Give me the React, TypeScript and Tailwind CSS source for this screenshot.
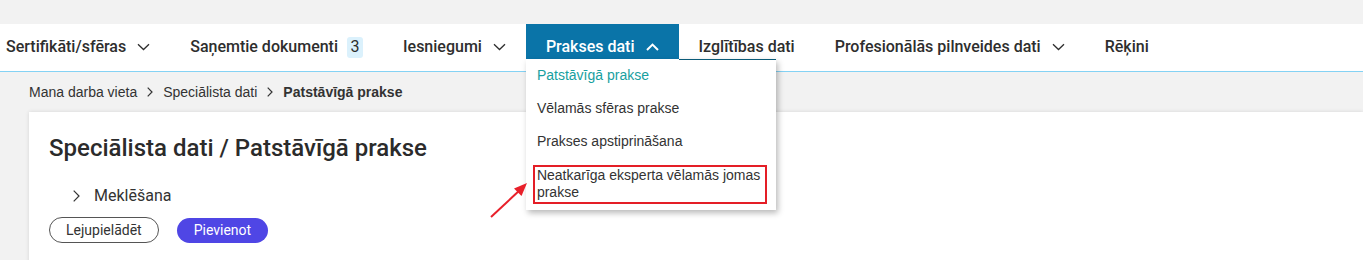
import React from "react";

const roboto = "font-['Roboto',_'Liberation_Sans',_sans-serif]";
const arial = "font-['Liberation_Sans',_Arial,_sans-serif]";

function ChevronDown({ className = "" }: { className?: string }) {
  return (
    <svg width="13" height="8" viewBox="0 0 13 8" className={className} fill="none">
      <path d="M1 1.2 6.5 6.5 12 1.2" stroke="currentColor" strokeWidth="1.3" />
    </svg>
  );
}

function ChevronUp() {
  return (
    <svg width="13" height="8" viewBox="0 0 13 8" fill="none">
      <path d="M1 7 6.5 1.6 12 7" stroke="currentColor" strokeWidth="2" />
    </svg>
  );
}

function ChevronRight({ w = 6, h = 10 }: { w?: number; h?: number }) {
  return (
    <svg width={w} height={h} viewBox={`0 0 ${w} ${h}`} fill="none">
      <path d={`M0.7 0.7 ${w - 1} ${h / 2} 0.7 ${h - 0.7}`} stroke="currentColor" strokeWidth="1.2" />
    </svg>
  );
}

const dropdownItems = ["Vēlamās sfēras prakse", "Prakses apstiprināšana"];

function PraksesMenu() {
  return (
    <div className="absolute left-0 top-full z-30 w-[250px] bg-white shadow-[2px_3px_6px_rgba(0,0,0,0.28)]">
      <div className="absolute left-[153px] right-0 top-0 h-px bg-[#0b5b78]" />
      <div className={`${arial} text-[14px] font-normal`}>
        <div className="flex h-[33px] items-center pl-[11px] text-[#18a0a0]">Patstāvīgā prakse</div>
        {dropdownItems.map((item) => (
          <div key={item} className="flex h-[33px] items-center pl-[11px] text-[#333]">
            {item}
          </div>
        ))}
        <div className="pb-[6px] pl-[7px] pr-[9px] pt-[7px]">
          <div className="border-2 border-[#e41e26] px-[2px] pb-px leading-[17px] text-[#333]">
            Neatkarīga eksperta vēlamās jomas prakse
          </div>
        </div>
      </div>
    </div>
  );
}

function NavBar() {
  return (
    <nav className={`${roboto} flex h-[48px] items-start border-b border-[#84d2f4] bg-white pl-[6px] text-[16px] font-medium text-[#2e2e2e]`}>
      <div className="flex h-[35px] items-end pr-5">
        <span className="flex h-6 items-center gap-[11px]">
          Sertifikāti/sfēras
          <ChevronDown />
        </span>
      </div>
      <div className="flex h-[35px] items-end px-5">
        <span className="flex h-6 items-center gap-[9px]">
          Saņemtie dokumenti
          <span className="flex h-[21px] w-4 items-center justify-center rounded-[3px] bg-[#dbf1fc] font-normal">3</span>
        </span>
      </div>
      <div className="flex h-[35px] items-end px-5">
        <span className="flex h-6 items-center gap-[11px]">
          Iesniegumi
          <ChevronDown />
        </span>
      </div>
      <div className="relative flex h-[35px] items-end bg-[#0a74a8] px-5 text-white">
        <span className="flex h-6 items-center gap-[11px]">
          Prakses dati
          <ChevronUp />
        </span>
        <PraksesMenu />
      </div>
      <div className="flex h-[35px] items-end px-5">
        <span className="flex h-6 items-center">Izglītības dati</span>
      </div>
      <div className="flex h-[35px] items-end px-5">
        <span className="flex h-6 items-center gap-[11px]">
          Profesionālās pilnveides dati
          <ChevronDown />
        </span>
      </div>
      <div className="flex h-[35px] items-end px-5">
        <span className="flex h-6 items-center">Rēķini</span>
      </div>
    </nav>
  );
}

export default function App() {
  return (
    <div className="relative h-[260px] w-full overflow-hidden bg-[#f2f2f2]">
      <div className="h-6" />
      <NavBar />

      <div className={`${arial} flex h-[40px] items-center gap-[10px] pl-[29px] text-[14px] text-[#333]`}>
        <span>Mana darba vieta</span>
        <ChevronRight />
        <span>Speciālista dati</span>
        <ChevronRight />
        <span className="font-bold">Patstāvīgā prakse</span>
      </div>

      <div className="ml-[29px] h-[200px] bg-white pl-5 pt-5 shadow-[0_0_4px_rgba(0,0,0,0.12)]">
        <h1 className={`${roboto} text-[24px] font-medium leading-8 text-[#2b2b2b]`}>
          Speciālista dati / Patstāvīgā prakse
        </h1>
        <div className={`${roboto} mt-5 flex h-6 items-center gap-[14px] pl-6 text-[16px] text-[#333]`}>
          <ChevronRight w={7} h={12} />
          <span>Meklēšana</span>
        </div>
        <div className={`${roboto} mt-[9px] flex items-center gap-[18px] text-[14px]`}>
          <button className="flex h-[26px] items-center rounded-full border border-[#555] px-4 text-[#333]">
            Lejupielādēt
          </button>
          <button className="flex h-[25px] items-center rounded-full bg-[#4f46e5] px-[17px] text-white">
            Pievienot
          </button>
        </div>
      </div>

      <svg className="absolute left-[488px] top-[180px] z-40" width="44" height="42" viewBox="0 0 44 42" fill="none">
        <path d="M3 37 33 9" stroke="#e8202a" strokeWidth="2" />
        <path d="M39 3 26 8.5 33.5 16 Z" fill="#e8202a" />
      </svg>
    </div>
  );
}
